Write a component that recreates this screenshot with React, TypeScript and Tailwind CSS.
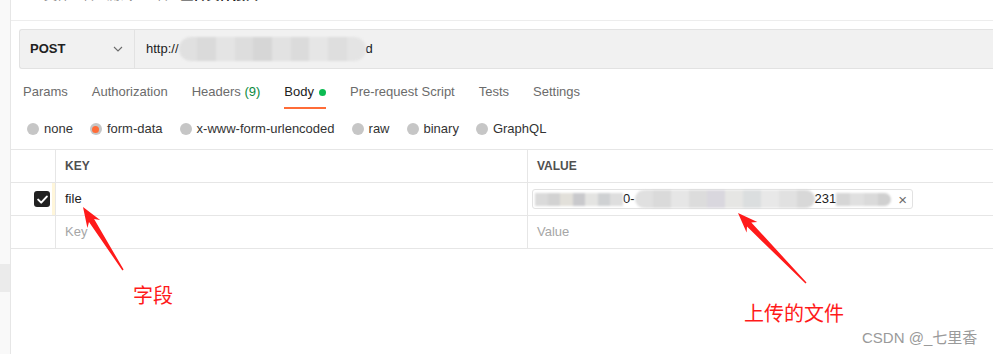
import React from 'react';

type Pt = [number, number];

// builds a tapered arrow polygon from tail to tip (annotation style)
function arrowPoints(tail: Pt, tip: Pt) {
  const dx = tip[0] - tail[0];
  const dy = tip[1] - tail[1];
  const len = Math.hypot(dx, dy);
  const ux = dx / len;
  const uy = dy / len;
  const nx = -uy;
  const ny = ux;
  const at = (d: number, w: number): Pt => [tip[0] - ux * d + nx * w, tip[1] - uy * d + ny * w];
  const pts: Pt[] = [
    tip,
    at(20, 7.5),
    at(16, 3),
    [tail[0] + nx * 0.7, tail[1] + ny * 0.7],
    [tail[0] - nx * 0.7, tail[1] - ny * 0.7],
    at(16, -3),
    at(20, -7.5),
  ];
  return pts.map(p => `${p[0].toFixed(1)},${p[1].toFixed(1)}`).join(' ');
}

const Mosaic: React.FC<{ cells: string[]; className?: string }> = ({ cells, className }) => (
  <div className={`flex overflow-hidden blur-[1px] ${className || ''}`}>
    {cells.map((c, i) => (
      <div key={i} className="h-full flex-1" style={{ backgroundColor: c }} />
    ))}
  </div>
);

const tabs = ['Params', 'Authorization', 'Headers', 'Body', 'Pre-request Script', 'Tests', 'Settings'];
const bodyTypes = ['none', 'form-data', 'x-www-form-urlencoded', 'raw', 'binary', 'GraphQL'];

const App: React.FC = () => {
  return (
    <div className="relative flex h-[354px] w-full overflow-hidden bg-white font-['Liberation_Sans','Noto_Sans_CJK_SC',sans-serif] text-[13px]">
      {/* left sidebar strip */}
      <aside className="flex w-[11px] shrink-0 flex-col border-r border-[#e6e6e6] bg-[#f9f9f9]">
        <div className="h-[264px]" />
        <div className="h-[28px] bg-[#ebebeb]" />
      </aside>

      <main className="flex min-w-0 flex-1 flex-col">
        {/* breadcrumb (cut off at top) */}
        <div className="h-[21px] shrink-0 overflow-hidden border-b border-[#ededed] pl-[33px]">
          <div className="-mt-[13px] flex leading-[16px]">
            <span className="text-[#8a8a8a]">文件上传 / 测试 / 上传 /&nbsp;</span>
            <span className="font-bold text-[#212121]">上传文件接口</span>
          </div>
        </div>

        {/* url bar */}
        <div className="ml-[8px] mt-[8px] flex h-[40px] shrink-0 rounded-l-[3px] border border-r-0 border-[#e2e2e2] bg-[#f1f1f1]">
          <div className="flex w-[115px] items-center justify-between border-r border-[#e2e2e2] pl-[10px] pr-[11px]">
            <span className="font-bold text-[#212121]">POST</span>
            <svg width="10" height="6" viewBox="0 0 10 6" fill="none">
              <path d="M1 1l4 4 4-4" stroke="#6b6b6b" strokeWidth="1.1" />
            </svg>
          </div>
          <div className="flex items-center pl-[11px] text-[#212121]">
            <span>http://</span>
            <Mosaic
              className="h-[24px] w-[187px] rounded-full"
              cells={['#e0e0e0', '#dadada', '#e4e4e4', '#dddddd', '#d6d6d6', '#e2e2e2', '#dbdbdb', '#e6e6e6', '#dedede', '#e4e4e4']}
            />
            <span>d</span>
          </div>
        </div>

        {/* tabs */}
        <div className="mt-[11px] flex gap-[24px] pl-[12px]">
          {tabs.map(t => (
            <div
              key={t}
              className={`flex items-center border-b-2 pb-[7px] pt-[4px] leading-[16px] ${
                t === 'Body' ? 'border-[#ff6c37] text-[#212121]' : 'border-transparent text-[#6b6b6b]'
              }`}
            >
              {t}
              {t === 'Headers' && <span className="text-[#0a8a3e]">&nbsp;(9)</span>}
              {t === 'Body' && <span className="ml-[5px] h-[7px] w-[7px] rounded-full bg-[#0cbb52]" />}
            </div>
          ))}
        </div>

        {/* body type radios */}
        <div className="mt-[10px] flex h-[20px] items-center gap-[17px] pl-[16px]">
          {bodyTypes.map(b => (
            <div key={b} className="flex items-center gap-[5px] text-[#333333]">
              <span className="flex h-[12px] w-[12px] items-center justify-center rounded-full bg-[#c6c6c6]">
                {b === 'form-data' && <span className="h-[7px] w-[7px] rounded-full bg-[#ff6c37]" />}
              </span>
              {b}
            </div>
          ))}
        </div>

        {/* key/value table */}
        <div className="mt-[10px] border-t border-[#e6e6e6]">
          <div className="grid h-[33px] grid-cols-[45px_472px_1fr] border-b border-[#e6e6e6] text-[12px] font-bold text-[#505050]">
            <div className="border-r border-[#e6e6e6]" />
            <div className="flex items-center border-r border-[#e6e6e6] pl-[9px]">KEY</div>
            <div className="flex items-center pl-[9px]">VALUE</div>
          </div>

          <div className="grid h-[33px] grid-cols-[45px_472px_1fr] border-b border-[#e6e6e6]">
            <div className="flex justify-end border-r border-[#e6e6e6]">
              <div className="flex items-center pr-[2px]">
                <span className="flex h-[16px] w-[16px] items-center justify-center rounded-[3px] bg-[#212121]">
                  <svg width="11" height="9" viewBox="0 0 11 9" fill="none">
                    <path d="M1.2 4.6l3 3 5.6-6" stroke="#fff" strokeWidth="2" strokeLinecap="round" strokeLinejoin="round" />
                  </svg>
                </span>
              </div>
              <div className="w-[3px] bg-[#fff6da]" />
            </div>
            <div className="flex items-center border-r border-[#e6e6e6] pl-[9px] text-[#212121]">file</div>
            <div className="flex items-center pl-[4px]">
              <div className="flex h-[20px] w-[381px] items-center rounded-[3px] border border-[#e2e2e2] pl-[2px] pr-[5px] text-[#212121]">
                <Mosaic
                  className="h-[13px] w-[88px]"
                  cells={['#dadada', '#d2d2d2', '#e2e0da', '#c9c9cc', '#e4e4e2', '#cfd1d3', '#dedede']}
                />
                <span>0-</span>
                <Mosaic
                  className="h-[18px] w-[180px] rounded-full"
                  cells={['#e0e0e0', '#dadada', '#e6e6e6', '#dcdcdc', '#d9d7de', '#e6e6e4', '#dbdedf', '#e8e8e8', '#e1e1e1', '#d8d8d8']}
                />
                <span>231</span>
                <Mosaic className="h-[13px] w-[55px] rounded-r-full" cells={['#d6d6d6', '#e0e0e0', '#dadada', '#d0d0d0']} />
                <span className="ml-auto text-[15px] leading-none text-[#6b6b6b]">×</span>
              </div>
            </div>
          </div>

          <div className="grid h-[33px] grid-cols-[45px_472px_1fr] border-b border-[#e6e6e6] text-[#a6a6a6]">
            <div className="border-r border-[#e6e6e6]" />
            <div className="flex items-center border-r border-[#e6e6e6] pl-[9px]">Key</div>
            <div className="flex items-center pl-[9px]">Value</div>
          </div>
        </div>
      </main>

      {/* annotations drawn over the screenshot */}
      <svg className="pointer-events-none absolute inset-0" width="993" height="354">
        <polygon points={arrowPoints([123, 270], [83, 207])} fill="#ff1a1a" />
        <polygon points={arrowPoints([806, 283], [738, 213])} fill="#ff1a1a" />
      </svg>
      <span className="absolute left-[133px] top-[284px] text-[20px] leading-[24px] text-[#ff1a1a]">字段</span>
      <span className="absolute left-[744px] top-[302px] text-[20px] leading-[24px] text-[#ff1a1a]">上传的文件</span>
      <span className="absolute left-[862px] top-[329px] text-[15px] leading-[18px] text-[#9a9a9a]">CSDN @_七里香</span>
    </div>
  );
};

export default App;
